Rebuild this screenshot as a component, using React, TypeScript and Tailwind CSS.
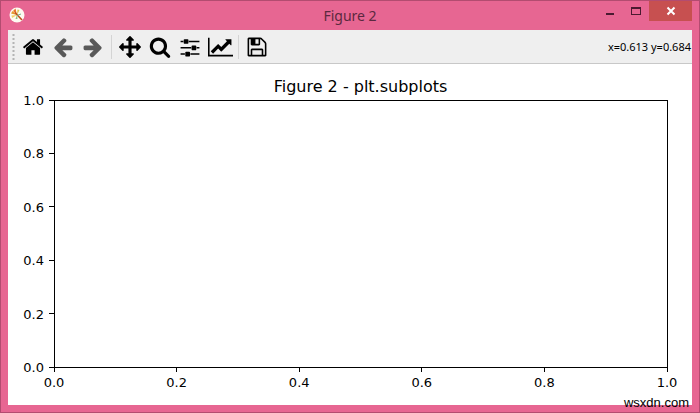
import type { ReactNode } from "react";

const ticks = [0, 20, 40, 60, 80, 100];

function formatTick(value: number) {
  return (value / 100).toFixed(1);
}

function AppIcon() {
  return (
    <svg viewBox="0 0 16 16" className="size-4 shrink-0" aria-hidden="true">
      <circle cx="8" cy="8" r="7.5" fill="#fdfbf2" />
      <path d="M8 8 2 6.500 3.500 4z" fill="#e59a2c" />
      <path d="M8 8 4 4 6.500 1.500z" fill="#e8762c" />
      <path d="M8 8 3 11 2.500 8.500z" fill="#f0cf6a" />
      <path d="M8 8 8.500 2.500 10.500 3z" fill="#dcc850" />
      <path d="M8 8 6.500 12 8.500 12z" fill="#8dbf78" />
      <path d="M6 5.500 13 13" stroke="#c0501f" strokeWidth="1.6" />
      <path d="M8 8.500 12 7" stroke="#6fb08a" />
    </svg>
  );
}

type ToolButtonProps = {
  label: string;
  path: string;
  wide?: boolean;
  muted?: boolean;
};

function ToolButton({ label, path, wide, muted }: ToolButtonProps) {
  return (
    <button
      type="button"
      aria-label={label}
      className={`flex h-8 w-[30px] shrink-0 items-center justify-center ${muted ? "text-[#595959]" : "text-black"}`}
    >
      <svg
        viewBox={wide ? "0 0 2048 1792" : "0 0 1792 1792"}
        className={wide ? "h-[22px] w-[25px]" : "size-[22px]"}
        fill="currentColor"
        aria-hidden="true"
      >
        <path d={path} />
      </svg>
    </button>
  );
}

function Separator() {
  return <div className="mx-[3px] h-6 w-px shrink-0 bg-[#d4d4d4]" />;
}

const icons = {
  home: "M1472 992v480q0 26-19 45t-45 19h-384v-384h-256v384h-384q-26 0-45-19t-19-45v-480q0-1 .5-3t.5-3l575-474 575 474q1 2 1 6zm223-69l-62 74q-8 9-21 11h-3q-13 0-21-7l-692-577-692 577q-12 8-24 7-13-2-21-11l-62-74q-8-10-7-23.5t11-21.5l719-599q32-26 76-26t76 26l244 204v-195q0-14 9-23t23-9h192q14 0 23 9t9 23v408l219 182q10 8 11 21.5t-7 23.5z",
  back: "M1664 896v128q0 53-32.5 90.5t-84.5 37.5h-704l293 294q38 36 38 90t-38 90l-75 76q-37 37-90 37-52 0-91-37l-651-652q-37-37-37-90 0-52 37-91l651-650q38-38 91-38 52 0 90 38l75 74q38 38 38 91t-38 91l-293 293h704q52 0 84.5 37.5t32.5 90.5z",
  forward:
    "M1600 960q0 54-37 91l-651 651q-39 37-91 37-51 0-90-37l-75-75q-38-38-38-91t38-91l293-293h-704q-52 0-84.5-37.5t-32.5-90.5v-128q0-53 32.5-90.5t84.5-37.5h704l-293-294q-38-36-38-90t38-90l75-75q38-38 90-38 53 0 91 38l651 651q37 35 37 90z",
  pan: "M1792 896q0 26-19 45l-256 256q-19 19-45 19t-45-19-19-45v-128h-384v384h128q26 0 45 19t19 45-19 45l-256 256q-19 19-45 19t-45-19l-256-256q-19-19-19-45t19-45 45-19h128v-384h-384v128q0 26-19 45t-45 19-45-19l-256-256q-19-19-19-45t19-45l256-256q19-19 45-19t45 19 19 45v128h384v-384h-128q-26 0-45-19t-19-45 19-45l256-256q19-19 45-19t45 19l256 256q19 19 19 45t-19 45-45 19h-128v384h384v-128q0-26 19-45t45-19 45 19l256 256q19 19 19 45z",
  zoom: "M1216 832q0-185-131.5-316.5t-316.5-131.5-316.5 131.5-131.5 316.5 131.5 316.5 316.5 131.5 316.5-131.5 131.5-316.5zm512 832q0 52-38 90t-90 38q-54 0-90-38l-343-342q-179 124-399 124-143 0-273.5-55.5t-225-150-150-225-55.5-273.5 55.5-273.5 150-225 225-150 273.5-55.5 273.5 55.5 225 150 150 225 55.5 273.5q0 220-124 399l343 343q37 37 37 90z",
  sliders:
    "M480 1408v128h-352v-128h352zm352-128q26 0 45 19t19 45v256q0 26-19 45t-45 19h-256q-26 0-45-19t-19-45v-256q0-26 19-45t45-19h256zm160-384v128h-864v-128h864zm-640-512v128h-224v-128h224zm1312 1024v128h-736v-128h736zm-960-1152q26 0 45 19t19 45v256q0 26-19 45t-45 19h-256q-26 0-45-19t-19-45v-256q0-26 19-45t45-19h256zm640 512q26 0 45 19t19 45v256q0 26-19 45t-45 19h-256q-26 0-45-19t-19-45v-256q0-26 19-45t45-19h256zm320 128v128h-224v-128h224zm0-512v128h-864v-128h864z",
  chart:
    "M2048 1536v128h-2048v-1536h128v1408h1920zm-128-1248v435q0 21-19.5 29.5t-35.5-7.5l-121-121-633 633q-10 10-23 10t-23-10l-233-233-416 416-192-192 585-585q10-10 23-10t23 10l233 233 464-464-121-121q-16-16-7.5-35.5t29.5-19.5h435q14 0 23 9t9 23z",
  save: "M512 1536h768v-384h-768v384zm896 0h128v-896q0-14-10-38.5t-20-34.5l-281-281q-10-10-34-20t-39-10v416q0 40-28 68t-68 28h-576q-40 0-68-28t-28-68v-416h-128v1280h128v-416q0-40 28-68t68-28h832q40 0 68 28t28 68v416zm-384-928v-320q0-13-9.5-22.5t-22.5-9.5h-192q-13 0-22.5 9.5t-9.5 22.5v320q0 13 9.5 22.5t22.5 9.5h192q13 0 22.5-9.5t9.5-22.5zm640 32v928q0 40-28 68t-68 28h-1344q-40 0-68-28t-28-68v-1344q0-40 28-68t68-28h928q40 0 88 20t76 48l280 280q28 28 48 76t20 88z",
};

function TitleBar() {
  return (
    <header className="grid h-[29px] shrink-0 grid-cols-[1fr_auto_1fr] items-center">
      <div className="pb-px pl-px">
        <AppIcon />
      </div>
      <h1 className="font-['Noto_Sans',sans-serif] text-sm text-[#5b2940]">Figure 2</h1>
      <div className="flex items-start justify-end self-start text-[#4b1a30]">
        <button type="button" aria-label="Minimize" className="flex h-5 w-[26px] items-center justify-center">
          <svg viewBox="0 0 10 10" className="size-[10px]" aria-hidden="true">
            <path d="M1 7h8v2H1z" fill="currentColor" />
          </svg>
        </button>
        <button type="button" aria-label="Maximize" className="flex h-5 w-[26px] items-center justify-center">
          <svg viewBox="0 0 10 10" className="size-[10px]" aria-hidden="true">
            <path d="M0 1h10v8H0zM1 3v5h8V3z" fill="currentColor" fillRule="evenodd" />
          </svg>
        </button>
        <button type="button" aria-label="Close" className="flex h-5 w-[43px] items-center justify-center bg-[#c75050] text-white">
          <svg viewBox="0 0 10 10" className="size-[10px]" aria-hidden="true">
            <path d="M1.500 1.500l7 7M8.500 1.500l-7 7" stroke="currentColor" strokeWidth="2" />
          </svg>
        </button>
      </div>
    </header>
  );
}

function Toolbar({ children, status }: { children: ReactNode; status: string }) {
  return (
    <div role="toolbar" className="flex h-[34px] shrink-0 items-center border-b border-[#c8c8c8] bg-[#efefef] pl-1">
      <svg width="3" height="28" className="mr-[3px] shrink-0" aria-hidden="true">
        <path d="M1.500 1v27" stroke="#b4b4b4" strokeWidth="2" strokeDasharray="2 2" />
      </svg>
      {children}
      <output className="ml-auto whitespace-nowrap pt-[2px] pr-px font-['Noto_Sans',sans-serif] text-[11px] text-black">
        {status}
      </output>
    </div>
  );
}

function Axes() {
  return (
    <svg
      width="100%"
      height="100%"
      className="min-h-0 flex-1 overflow-visible font-['DejaVu_Sans',sans-serif] text-[13px]"
      role="img"
      aria-label="Empty axes from 0.0 to 1.0"
    >
      <rect width="100%" height="100%" fill="none" stroke="black" shapeRendering="crispEdges" />
      {ticks.map(tick => (
        <svg key={`x-${tick}`} x={`${tick}%`} y="100%" className="overflow-visible">
          <path d="M0 0v5" stroke="black" shapeRendering="crispEdges" />
          <text y="20" textAnchor="middle">
            {formatTick(tick)}
          </text>
        </svg>
      ))}
      {ticks.map(tick => (
        <svg key={`y-${tick}`} x="0" y={`${100 - tick}%`} className="overflow-visible">
          <path d="M0 0h-5" stroke="black" shapeRendering="crispEdges" />
          <text x="-10" y="5" textAnchor="end">
            {formatTick(tick)}
          </text>
        </svg>
      ))}
    </svg>
  );
}

export default function App() {
  return (
    <div className="relative flex min-h-screen flex-col border border-[#b34c70] bg-[#e76692] px-[7px] pb-[7px]">
      <TitleBar />
      <Toolbar status="x=0.613 y=0.684">
        <ToolButton label="Home" path={icons.home} />
        <ToolButton label="Back" path={icons.back} muted />
        <ToolButton label="Forward" path={icons.forward} muted />
        <Separator />
        <ToolButton label="Pan" path={icons.pan} />
        <ToolButton label="Zoom" path={icons.zoom} />
        <ToolButton label="Configure subplots" path={icons.sliders} />
        <ToolButton label="Edit axis" path={icons.chart} wide />
        <Separator />
        <ToolButton label="Save" path={icons.save} />
      </Toolbar>
      <main className="flex flex-1 flex-col bg-white pt-[11px] pr-[25px] pb-[38px] pl-[46px]">
        <h2 className="h-[25px] shrink-0 text-center font-['DejaVu_Sans',sans-serif] text-base text-black">
          Figure 2 - plt.subplots
        </h2>
        <Axes />
      </main>
      <a
        href="#"
        className="absolute right-[10px] bottom-px font-['Liberation_Sans',sans-serif] text-[13px] leading-4 text-black"
      >
        wsxdn.com
      </a>
    </div>
  );
}
